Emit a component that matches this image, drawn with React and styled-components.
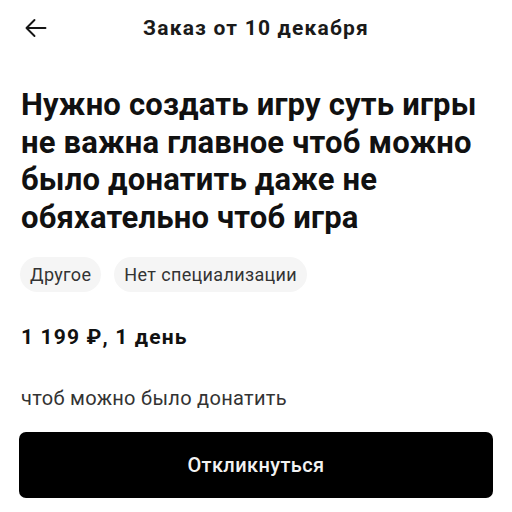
import React from "react";
import styled, { createGlobalStyle } from "styled-components";

const GlobalStyle = createGlobalStyle`
  body {
    margin: 0;
    background: #ffffff;
    font-family: "Roboto", "Noto Sans", sans-serif;
    color: #111111;
  }
`;

const App = () => {
  return (
    <Page>
      <GlobalStyle />
      <Header>
        <BackButton aria-label="Назад">
          <svg width="23" height="20" viewBox="0 0 23 20" fill="none">
            <path
              d="M21.5 10H2.5M10.5 2L2.5 10l8 8"
              stroke="#151515"
              strokeWidth="1.9"
              strokeLinecap="round"
              strokeLinejoin="round"
            />
          </svg>
        </BackButton>
        <HeaderTitle>Заказ от 10 декабря</HeaderTitle>
      </Header>
      <Content>
        <Title>
          Нужно создать игру суть игры не важна главное чтоб можно было
          донатить даже не обяхательно чтоб игра
        </Title>
        <Tags>
          <Tag>Другое</Tag>
          <Tag>Нет специализации</Tag>
        </Tags>
        <Price>1 199 ₽, 1 день</Price>
        <Description>чтоб можно было донатить</Description>
        <RespondButton>Откликнуться</RespondButton>
      </Content>
    </Page>
  );
};

export default App;

const Page = styled.div`
  width: 512px;
  height: 512px;
  overflow: hidden;
  background: #fff;
`;

const Header = styled.div`
  position: relative;
  height: 56px;
  display: flex;
  align-items: center;
  justify-content: center;
`;

const BackButton = styled.div`
  position: absolute;
  left: 24px;
  top: 18px;
  display: flex;
`;

const HeaderTitle = styled.h1`
  margin: 0;
  font-size: 21px;
  line-height: 25px;
  font-weight: 700;
  color: #1a1a1a;
  letter-spacing: 1.2px;
`;

const Content = styled.div`
  padding: 30px 12px 0 21px;
  display: flex;
  flex-direction: column;
`;

const Title = styled.h2`
  margin: 0;
  font-size: 31px;
  line-height: 37.5px;
  font-weight: 700;
  color: #111;
  letter-spacing: 0.18px;
`;

const Tags = styled.div`
  display: flex;
  gap: 13px;
  margin-top: 21px;
  margin-left: -1px;
`;

const Tag = styled.span`
  height: 35px;
  padding: 0 10px;
  border-radius: 18px;
  background: #f5f5f5;
  display: flex;
  align-items: center;
  font-size: 18px;
  color: #333;
  letter-spacing: 0.35px;
`;

const Price = styled.div`
  margin-top: 33px;
  font-size: 21px;
  line-height: 25px;
  font-weight: 700;
  color: #111;
  letter-spacing: 1.15px;
`;

const Description = styled.p`
  margin: 37px 0 0 0;
  font-size: 20px;
  line-height: 23px;
  color: #333;
  letter-spacing: 0.3px;
`;

const RespondButton = styled.button`
  margin: 22px 0 0 -2px;
  height: 66px;
  width: 474px;
  border: none;
  border-radius: 7px;
  background: #000;
  color: #f2f2f2;
  font-family: "Roboto", sans-serif;
  font-size: 20px;
  font-weight: 500;
  letter-spacing: 0.4px;
`;
